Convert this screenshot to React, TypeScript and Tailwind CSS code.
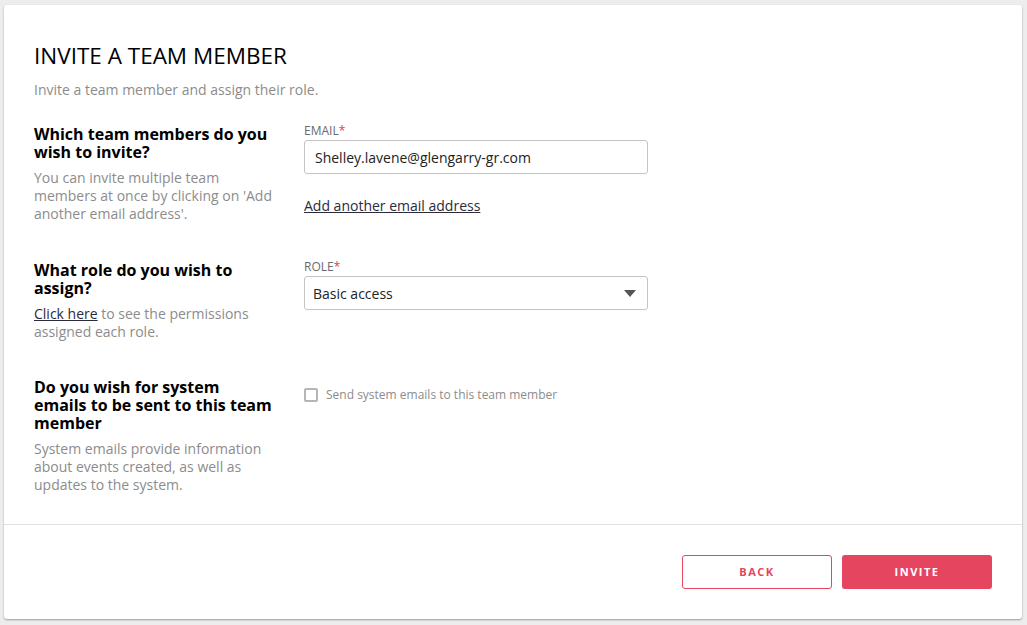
import React, { useState } from 'react';

const font = { fontFamily: '"Open Sans", "Noto Sans", sans-serif' };

function Section({
  title,
  children,
  right,
  className = ''
}: {
  title: string;
  children: React.ReactNode;
  right: React.ReactNode;
  className?: string;
}) {
  return (
    <div className={`flex ${className}`}>
      <div className="w-[240px] shrink-0">
        <h3 className="text-[16px] font-bold leading-[18px] text-black">{title}</h3>
        <p className="mt-[8px] text-[14px] leading-[18px] text-[#8c8c8c]">{children}</p>
      </div>
      <div className="ml-[30px] w-[344px]">{right}</div>
    </div>
  );
}

export default function App() {
  const [email, setEmail] = useState('Shelley.lavene@glengarry-gr.com');
  const [sendMail, setSendMail] = useState(false);

  return (
    <div className="min-h-[625px] bg-[#ededed] pt-[5px] pl-[4px] pr-[5px] pb-[6px]" style={font}>
      <div className="flex h-[614px] flex-col rounded-[3px] bg-white shadow-[0_1px_2px_rgba(0,0,0,0.35)]">
        <div className="flex-1 px-[30px] pt-[36px]">
          <h1 className="text-[22.5px] leading-[30px] font-normal text-black">INVITE A TEAM MEMBER</h1>
          <p className="mt-[9px] text-[14px] leading-[20px] text-[#8c8c8c]">
            Invite a team member and assign their role.
          </p>

          <Section
            className="mt-[25px]"
            title="Which team members do you wish to invite?"
            right={
              <div className="-mt-[2px]">
                <label className="block text-[12px] leading-[16px] text-[#6b6b6b]">
                  EMAIL<span className="text-[#e8374f]">*</span>
                </label>
                <input
                  value={email}
                  onChange={(e) => setEmail(e.target.value)}
                  className="mt-[1px] h-[34px] w-full rounded-[3px] border border-[#c4c4c4] px-[10px] text-[14px] text-[#222] outline-none"
                />
                <a href="#" className="mt-[22px] inline-block text-[14px] leading-[20px] text-[#2b2b3b] underline">
                  Add another email address
                </a>
              </div>
            }
          >
            You can invite multiple team members at once by clicking on 'Add another email address'.
          </Section>

          <Section
            className="mt-[38px]"
            title="What role do you wish to assign?"
            right={
              <div className="-mt-[2px]">
                <label className="block text-[12px] leading-[16px] text-[#6b6b6b]">
                  ROLE<span className="text-[#e8374f]">*</span>
                </label>
                <div className="mt-[1px] flex h-[34px] w-full items-center justify-between rounded-[3px] border border-[#c4c4c4] pr-[11px] pl-[8px]">
                  <span className="text-[14px] text-[#222]">Basic access</span>
                  <svg width="12" height="7" viewBox="0 0 12 7">
                    <path d="M0 0h12L6 7z" fill="#555" />
                  </svg>
                </div>
              </div>
            }
          >
            <a href="#" className="text-[#2b2b3b] underline">
              Click here
            </a>{' '}
            to see the permissions assigned each role.
          </Section>

          <Section
            className="mt-[37px]"
            title="Do you wish for system emails to be sent to this team member"
            right={
              <label className="mt-[9px] flex cursor-pointer items-center gap-[8px]">
                <input
                  type="checkbox"
                  checked={sendMail}
                  onChange={(e) => setSendMail(e.target.checked)}
                  className="h-[14px] w-[14px] appearance-none rounded-[2px] border-2 border-[#b5b5b5] checked:bg-[#e6455f]"
                />
                <span className="text-[12px] leading-[16px] text-[#8c8c8c]">
                  Send system emails to this team member
                </span>
              </label>
            }
          >
            System emails provide information about events created, as well as updates to the system.
          </Section>
        </div>

        <div className="flex h-[95px] items-start justify-end gap-[10px] border-t border-[#e0e0e0] pt-[30px] pr-[30px]">
          <button className="h-[34px] w-[150px] rounded-[3px] border border-[#e6455f] bg-white text-[11px] font-bold tracking-[1.5px] text-[#e6455f]">
            BACK
          </button>
          <button className="h-[34px] w-[150px] rounded-[3px] bg-[#e6455f] text-[11px] font-bold tracking-[1.5px] text-white">
            INVITE
          </button>
        </div>
      </div>
    </div>
  );
}
